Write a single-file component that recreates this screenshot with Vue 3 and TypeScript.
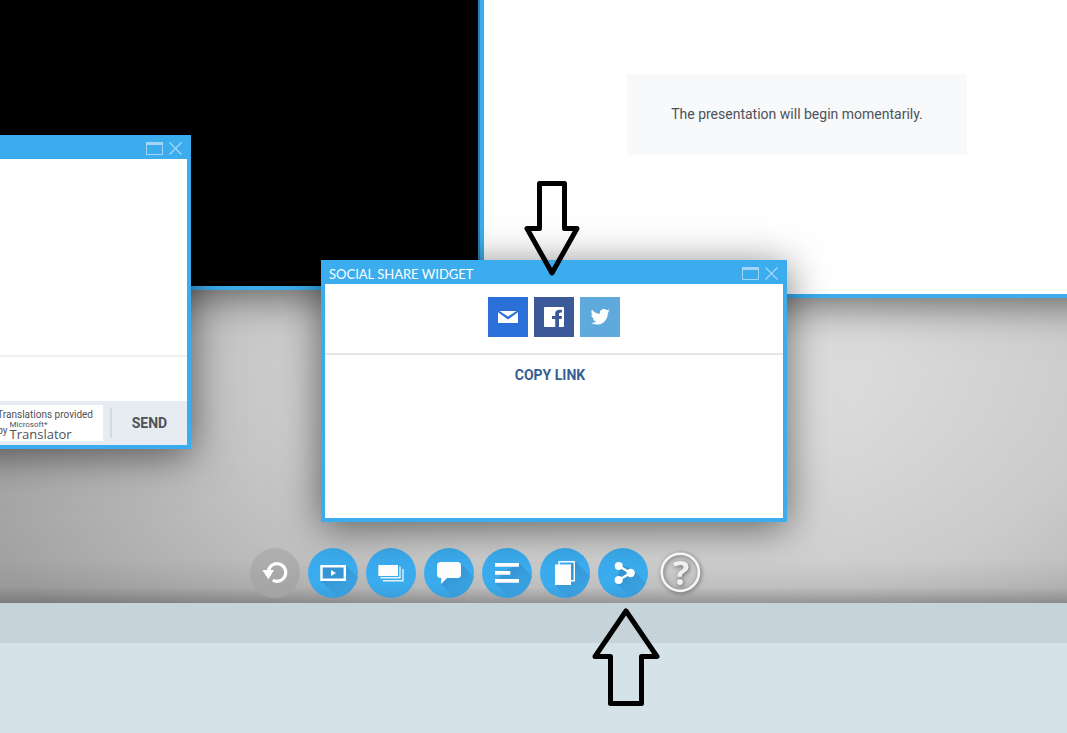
<script setup lang="ts">
import { ref } from 'vue'

const message = ref('')
</script>

<template>
  <div class="page">
    <main class="desktop">
      <section class="window video" aria-label="Video">
        <div class="screen"></div>
      </section>

      <section class="window slides" aria-label="Presentation">
        <p class="notice">The presentation will begin momentarily.</p>
      </section>

      <section class="window chat" aria-label="Chat">
        <header class="titlebar">
          <span class="title"></span>
          <button class="tool" type="button" aria-label="Maximize chat">
            <svg width="18" height="14" viewBox="0 0 18 14"><path d="M0.5 0.5h16v12h-16z" fill="none" stroke="#a3d6f6" /><path d="M0 0h17v3H0z" fill="#a3d6f6" /></svg>
          </button>
          <button class="tool" type="button" aria-label="Close chat">
            <svg width="14" height="14" viewBox="0 0 14 14"><path d="M0.5 0.5l12 12M12.5 0.5l-12 12" stroke="#a3d6f6" stroke-width="1.3" /></svg>
          </button>
        </header>
        <div class="messages"></div>
        <textarea v-model="message" class="entry" aria-label="Message"></textarea>
        <footer class="chat-foot">
          <div class="badge">
            <div>Translations provided</div>
            <div class="brand">
              <span>by</span>
              <span class="brand-name"><small>Microsoft*</small><b>Translator</b></span>
            </div>
          </div>
          <button class="send" type="button">SEND</button>
        </footer>
      </section>

      <section class="window share" aria-label="Social share widget">
        <header class="titlebar">
          <span class="title">SOCIAL SHARE WIDGET</span>
          <button class="tool" type="button" aria-label="Maximize">
            <svg width="18" height="14" viewBox="0 0 18 14"><path d="M0.5 0.5h16v12h-16z" fill="none" stroke="#a3d6f6" /><path d="M0 0h17v3H0z" fill="#a3d6f6" /></svg>
          </button>
          <button class="tool" type="button" aria-label="Close">
            <svg width="14" height="14" viewBox="0 0 14 14"><path d="M0.5 0.5l12 12M12.5 0.5l-12 12" stroke="#a3d6f6" stroke-width="1.3" /></svg>
          </button>
        </header>
        <div class="networks">
          <button class="network mail" type="button" aria-label="Email">
            <svg width="40" height="40" viewBox="0 0 40 40" fill="#fff"><path d="M11.500 14h17L20 19.600z" /><path d="M10 15.200l10 7.300 10-7.300V26H10z" /></svg>
          </button>
          <button class="network facebook" type="button" aria-label="Facebook">
            <svg width="40" height="40" viewBox="0 0 40 40"><path d="M11 10h18q1 0 1 1v18q0 1-1 1h-4v-8h2.600l.4-3h-3v-2q0-1.500 1.600-1.500H28v-2.700h-2.600q-4.200 0-4.200 4V19H18v3h3.200v8H11q-1 0-1-1V11q0-1 1-1z" fill="#fff" /></svg>
          </button>
          <button class="network twitter" type="button" aria-label="Twitter">
            <svg width="40" height="40" viewBox="0 0 40 40"><path transform="translate(10.600 10.200) scale(.8)" fill="#fff" d="M23.953 4.570a10 10 0 01-2.825.775 4.958 4.958 0 002.163-2.723c-.951.555-2.005.959-3.127 1.184a4.920 4.920 0 00-8.384 4.482C7.690 8.095 4.067 6.130 1.640 3.162a4.822 4.822 0 00-.666 2.475c0 1.710.870 3.213 2.188 4.096a4.904 4.904 0 01-2.228-.616v.060a4.923 4.923 0 003.946 4.827 4.996 4.996 0 01-2.212.085 4.936 4.936 0 004.604 3.417 9.867 9.867 0 01-6.102 2.105c-.390 0-.779-.023-1.170-.067a13.995 13.995 0 007.557 2.209c9.053 0 13.998-7.496 13.998-13.985 0-.210 0-.420-.015-.630A9.935 9.935 0 0024 4.590z" /></svg>
          </button>
        </div>
        <div class="link-row">
          <button class="copy" type="button">COPY LINK</button>
        </div>
      </section>

      <nav class="dock" aria-label="Widgets">
        <button class="app off" type="button" aria-label="Reset layout">
          <svg width="50" height="50" viewBox="0 0 50 50"><path d="M18.300 23a8.800 8.800 0 1 1 4.500 9.200" fill="none" stroke="#fff" stroke-width="3.200" /><path d="M12.300 22H24l-5.600 9.300z" fill="#fff" /></svg>
        </button>
        <button class="app" type="button" aria-label="Video">
          <svg width="50" height="50" viewBox="0 0 50 50"><path d="M13 33L38 17.500 50 29.500V50H30z" fill="url(#cast)" /><path d="M13.500 18.200h23.300v13.600H13.500z" fill="#3795d3" stroke="#fff" stroke-width="2.400" /><path d="M23 22l5 3-5 3z" fill="#fff" /></svg>
        </button>
        <button class="app" type="button" aria-label="Slides">
          <svg width="50" height="50" viewBox="0 0 50 50"><path d="M12.300 17H32v11H12.300z" fill="#fff" /><path d="M34 18.500v11.200H14.500M37 21v11.700H17" fill="none" stroke="#e4f3fd" stroke-width="1.400" /></svg>
        </button>
        <button class="app" type="button" aria-label="Chat">
          <svg width="50" height="50" viewBox="0 0 50 50"><path d="M17 36L37 16l13 13v21H31z" fill="url(#cast)" /><path d="M17 14h16.500q3.500 0 3.500 3.500v9q0 3.500-3.500 3.500H23l-5.800 6V30Q13 30 13 26.500v-9Q13 14 17 14z" fill="#fff" /></svg>
        </button>
        <button class="app" type="button" aria-label="Agenda">
          <svg width="50" height="50" viewBox="0 0 50 50"><path d="M13 35l10-12 14-8 13 13v22H28z" fill="url(#cast)" /><path d="M13 15h24v3.700H13zM13 23h15.300v3.700H13zM13 31h24v3.800H13z" fill="#fff" /></svg>
        </button>
        <button class="app" type="button" aria-label="Resources">
          <svg width="50" height="50" viewBox="0 0 50 50"><path d="M15 37l20-24 15 15v22H28z" fill="url(#cast)" /><path d="M19 17v-3.300h15.300v19H30" fill="none" stroke="#fff" stroke-width="1.400" /><path d="M15 16.500h16V37H15z" fill="#fff" /></svg>
        </button>
        <button class="app" type="button" aria-label="Share">
          <svg width="50" height="50" viewBox="0 0 50 50"><path d="M18 35l5-18 12 5 15 15v13H33z" fill="url(#cast)" /><path d="M20.700 18l12 7-12 7" fill="none" stroke="#fff" stroke-width="2.400" /><g fill="#fff"><circle cx="20.700" cy="18" r="4" /><circle cx="32.700" cy="25" r="4.200" /><circle cx="20.700" cy="32" r="4" /></g></svg>
        </button>
        <button class="app help" type="button" aria-label="Help">
          <svg width="50" height="50" viewBox="0 0 50 50"><circle cx="24.300" cy="24.300" r="18.600" fill="none" stroke="#f6f6f6" stroke-width="2.600" /><text x="25" y="37" text-anchor="middle" class="mark">?</text></svg>
        </button>
      </nav>

      <svg class="defs" width="0" height="0" aria-hidden="true">
        <linearGradient id="cast" x1="0" y1="0" x2="0.600" y2="1"><stop offset="0" stop-color="#3187c2" stop-opacity=".85" /><stop offset="1" stop-color="#3b9ad9" stop-opacity=".4" /></linearGradient>
      </svg>
    </main>
    <div class="band"></div>
    <div class="base"></div>

    <svg class="pointer down" width="58" height="98" viewBox="0 0 58 98" aria-hidden="true"><path d="M17.500 4.500h25v45H55L30 94 5 49.500h12.500z" /></svg>
    <svg class="pointer up" width="70" height="102" viewBox="0 0 70 102" aria-hidden="true"><path d="M36 6l31 45.500H51.500v47h-31v-47H5z" /></svg>
  </div>
</template>

<style>
body {
  margin: 0;
}
</style>

<style scoped>
.page {
  position: relative;
  display: flex;
  flex-direction: column;
  min-height: 100vh;
  overflow: hidden;
  background: #d5e2e7;
  font-family: Roboto, "Liberation Sans", sans-serif;
  color: #4e5257;
}
button {
  padding: 0;
  border: 0;
  background: none;
  font: inherit;
  color: inherit;
  cursor: pointer;
}
svg {
  display: block;
}
.desktop {
  position: relative;
  display: flex;
  flex: 1;
  flex-direction: column;
  justify-content: flex-end;
  min-height: 603px;
  overflow: hidden;
  background:
    linear-gradient(to top, rgba(60, 60, 60, 0.38), rgba(90, 90, 90, 0.12) 16px, transparent 44px),
    radial-gradient(ellipse 760px 480px at 690px 350px, #e2e2e2 0%, #dadada 25%, #cbcbcb 55%, #b4b4b4 80%, #a2a2a2 100%);
}
.band {
  height: 40px;
  background: #c7d3db;
}
.base {
  height: 90px;
}
.window {
  position: absolute;
  box-sizing: border-box;
  display: flex;
  flex-direction: column;
  border: 4px solid #3badef;
  background: #fff;
  box-shadow: 0 6px 38px rgba(0, 0, 0, 0.54);
}
.video {
  top: -70px;
  left: -200px;
  width: 682px;
  height: 360px;
}
.screen {
  flex: 1;
  background: #000;
}
.slides {
  top: -70px;
  left: 480px;
  width: 634px;
  height: 368px;
  align-items: center;
}
.notice {
  box-sizing: border-box;
  width: 340px;
  margin: 140px 0 0;
  padding: 30px 0;
  background: #f7f9fb;
  font-size: 14px;
  line-height: 21px;
  text-align: center;
}
.chat {
  top: 135px;
  left: -189px;
  width: 380px;
  height: 314px;
  border-top: 0;
}
.share {
  top: 260px;
  left: 321px;
  width: 466px;
  height: 262px;
  border-top: 0;
}
.titlebar {
  display: flex;
  flex: none;
  align-items: center;
  gap: 5px;
  height: 24px;
  padding: 0 4px;
  background: #3badef;
}
.title {
  flex: 1;
  padding-top: 4px;
  font: 13px/20px Lato, "Open Sans", sans-serif;
  color: #fff;
}
.tool {
  padding-top: 4px;
}
.messages {
  flex: 1;
}
.entry {
  box-sizing: border-box;
  height: 46px;
  padding: 8px;
  border: 0;
  border-top: 2px solid #f0f0f0;
  outline: none;
  resize: none;
  font: 14px/18px Roboto, sans-serif;
}
.chat-foot {
  display: flex;
  align-items: center;
  justify-content: flex-end;
  height: 44px;
  background: #e6ecf2;
}
.badge {
  box-sizing: border-box;
  height: 36px;
  margin-right: 7px;
  padding: 4px 10px 0;
  background: #fff;
  font-size: 10px;
  line-height: 12px;
}
.brand {
  display: flex;
  align-items: center;
  gap: 2px;
}
.brand-name {
  display: flex;
  flex-direction: column;
  font-family: "Open Sans", sans-serif;
}
.brand-name small {
  font-family: Roboto, sans-serif;
  font-size: 8px;
  line-height: 8px;
}
.brand-name b {
  font-size: 13px;
  font-weight: 400;
  line-height: 11px;
}
.send {
  width: 77px;
  height: 30px;
  border-left: 2px solid #d5d8dc;
  font-size: 14px;
  font-weight: 700;
}
.networks {
  display: flex;
  justify-content: center;
  gap: 6px;
  padding: 13px 0 16px;
  border-bottom: 2px solid #e6e6e6;
}
.network {
  width: 40px;
  height: 40px;
}
.mail {
  background: #2a70d8;
}
.facebook {
  background: #3c5a99;
}
.twitter {
  background: #60a9dd;
}
.link-row {
  display: flex;
  justify-content: center;
  padding: 10px 8px 0 0;
}
.copy {
  font-size: 14px;
  font-weight: 700;
  line-height: 20px;
  color: #355f94;
}
.dock {
  display: flex;
  gap: 8px;
  padding: 0 0 5px 250px;
}
.app {
  flex: none;
  width: 50px;
  height: 50px;
  overflow: hidden;
  border-radius: 50%;
  background: linear-gradient(#3badef 70%, #3a9fdc);
}
.off {
  background: linear-gradient(#b0b0b0, #a3a3a3);
}
.help {
  background: none;
  filter: drop-shadow(1px 1px 2px rgba(0, 0, 0, 0.5));
}
.mark {
  font: 700 34px "Open Sans", sans-serif;
  fill: #f0f0f0;
}
.defs {
  position: absolute;
}
.pointer {
  position: absolute;
  fill: none;
  stroke: #000;
  stroke-width: 5;
  stroke-linejoin: round;
}
.down {
  top: 179px;
  left: 522px;
}
.up {
  top: 605px;
  left: 590px;
}
</style>
